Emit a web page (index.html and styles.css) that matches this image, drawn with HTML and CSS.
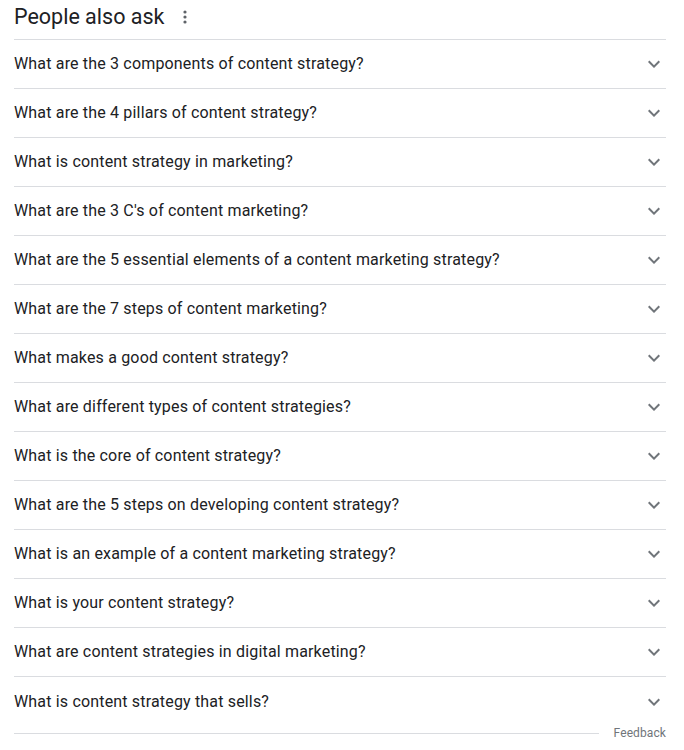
FILE: index.html
```html
<!DOCTYPE html>
<html>
<head>
<meta charset="utf-8">
<link rel="stylesheet" href="styles.css">
</head>
<body>
<div class="paa">
  <div class="header">
    <h2 class="title">People also ask</h2>
    <svg class="kebab" width="4" height="14" viewBox="0 0 4 14"><circle cx="2" cy="2" r="1.6"/><circle cx="2" cy="7" r="1.6"/><circle cx="2" cy="12" r="1.6"/></svg>
  </div>
  <div class="list">
    <div class="row"><span class="q">What are the 3 components of content strategy?</span><svg class="chev" viewBox="0 0 24 24"><path d="M7.41 8.59L12 13.17l4.59-4.58L18 10l-6 6-6-6 1.41-1.41z"/></svg></div>
    <div class="row"><span class="q">What are the 4 pillars of content strategy?</span><svg class="chev" viewBox="0 0 24 24"><path d="M7.41 8.59L12 13.17l4.59-4.58L18 10l-6 6-6-6 1.41-1.41z"/></svg></div>
    <div class="row"><span class="q">What is content strategy in marketing?</span><svg class="chev" viewBox="0 0 24 24"><path d="M7.41 8.59L12 13.17l4.59-4.58L18 10l-6 6-6-6 1.41-1.41z"/></svg></div>
    <div class="row"><span class="q">What are the 3 C's of content marketing?</span><svg class="chev" viewBox="0 0 24 24"><path d="M7.41 8.59L12 13.17l4.59-4.58L18 10l-6 6-6-6 1.41-1.41z"/></svg></div>
    <div class="row"><span class="q">What are the 5 essential elements of a content marketing strategy?</span><svg class="chev" viewBox="0 0 24 24"><path d="M7.41 8.59L12 13.17l4.59-4.58L18 10l-6 6-6-6 1.41-1.41z"/></svg></div>
    <div class="row"><span class="q">What are the 7 steps of content marketing?</span><svg class="chev" viewBox="0 0 24 24"><path d="M7.41 8.59L12 13.17l4.59-4.58L18 10l-6 6-6-6 1.41-1.41z"/></svg></div>
    <div class="row"><span class="q">What makes a good content strategy?</span><svg class="chev" viewBox="0 0 24 24"><path d="M7.41 8.59L12 13.17l4.59-4.58L18 10l-6 6-6-6 1.41-1.41z"/></svg></div>
    <div class="row"><span class="q">What are different types of content strategies?</span><svg class="chev" viewBox="0 0 24 24"><path d="M7.41 8.59L12 13.17l4.59-4.58L18 10l-6 6-6-6 1.41-1.41z"/></svg></div>
    <div class="row"><span class="q">What is the core of content strategy?</span><svg class="chev" viewBox="0 0 24 24"><path d="M7.41 8.59L12 13.17l4.59-4.58L18 10l-6 6-6-6 1.41-1.41z"/></svg></div>
    <div class="row"><span class="q">What are the 5 steps on developing content strategy?</span><svg class="chev" viewBox="0 0 24 24"><path d="M7.41 8.59L12 13.17l4.59-4.58L18 10l-6 6-6-6 1.41-1.41z"/></svg></div>
    <div class="row"><span class="q">What is an example of a content marketing strategy?</span><svg class="chev" viewBox="0 0 24 24"><path d="M7.41 8.59L12 13.17l4.59-4.58L18 10l-6 6-6-6 1.41-1.41z"/></svg></div>
    <div class="row"><span class="q">What is your content strategy?</span><svg class="chev" viewBox="0 0 24 24"><path d="M7.41 8.59L12 13.17l4.59-4.58L18 10l-6 6-6-6 1.41-1.41z"/></svg></div>
    <div class="row"><span class="q">What are content strategies in digital marketing?</span><svg class="chev" viewBox="0 0 24 24"><path d="M7.41 8.59L12 13.17l4.59-4.58L18 10l-6 6-6-6 1.41-1.41z"/></svg></div>
    <div class="row last"><span class="q">What is content strategy that sells?</span><svg class="chev" viewBox="0 0 24 24"><path d="M7.41 8.59L12 13.17l4.59-4.58L18 10l-6 6-6-6 1.41-1.41z"/></svg></div>
  </div>
  <div class="footer">
    <div class="rule"></div>
    <span class="feedback">Feedback</span>
  </div>
</div>
</body>
</html>
```

FILE: styles.css
```css
html, body {
  margin: 0;
  padding: 0;
  background: #fff;
}
body {
  font-family: Roboto, "Liberation Sans", Arial, sans-serif;
  color: #202124;
}
.paa {
  width: 652px;
  margin-left: 14px;
}
.header {
  display: flex;
  align-items: center;
  height: 40px;
  box-sizing: border-box;
  border-bottom: 1px solid #dadce0;
}
.title {
  margin: 0;
  font-size: 21.5px;
  font-weight: 400;
  line-height: 28px;
  color: #202124;
  position: relative;
  top: -3px;
}
.kebab {
  margin-left: 19px;
  fill: #5f6368;
  position: relative;
  top: -3px;
}
.row {
  display: flex;
  align-items: center;
  justify-content: space-between;
  height: 49px;
  box-sizing: border-box;
  border-bottom: 1px solid #dadce0;
}
.row.last {
  border-bottom: none;
  height: 49px;
}
.q {
  font-size: 16px;
  line-height: 24px;
  letter-spacing: 0.17px;
  color: #202124;
}
.chev {
  width: 24px;
  height: 24px;
  fill: #70757a;
}
.footer {
  display: flex;
  align-items: center;
  height: 14px;
  margin-top: 0;
}
.rule {
  flex: 1;
  height: 1px;
  background: #dadce0;
  margin-right: 15px;
}
.feedback {
  font-size: 12px;
  color: #70757a;
  line-height: 14px;
  letter-spacing: 0.1px;
}
```
